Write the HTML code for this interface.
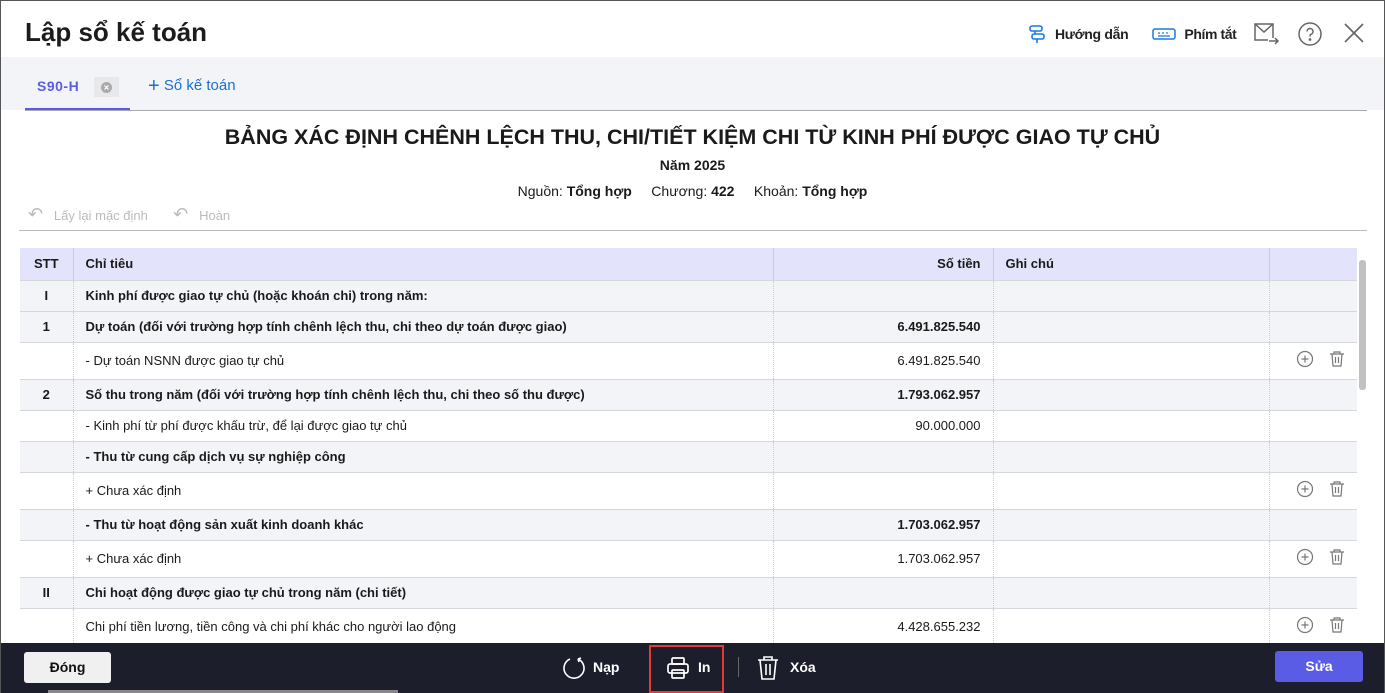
<!DOCTYPE html>
<html><head><meta charset="utf-8"><style>
*{box-sizing:border-box;margin:0;padding:0}
body{width:1385px;height:693px;overflow:hidden;font-family:"Liberation Sans",sans-serif;background:#fff;position:relative;color:#1a1a1a}
.frame{position:absolute;inset:0;border:1px solid #555;border-bottom:none;pointer-events:none;z-index:9}
.abs{position:absolute}
h1{position:absolute;left:25px;top:17px;font-size:26px;font-weight:bold;color:#1c1c1c}
.tabbar{position:absolute;left:1px;top:57px;width:1383px;height:53px;background:#f3f4f7}
.tabline{position:absolute;left:25px;top:110px;width:1342px;height:1px;background:#aaa}
table{position:absolute;left:20px;top:248px;border-collapse:collapse;font-size:13px;width:1337px}
td{border-bottom:1px solid #d6d7dd;padding:0 12px;white-space:nowrap}
td+td{border-left:1px dotted #ccc}
tr.h td{background:#e3e3fb;font-weight:bold;height:32px;border-left:1px solid #c9c9e0}
tr.h td:first-child{border-left:none}
tr.b td{background:#f3f4f8;font-weight:bold;height:31px}
tr.n td{height:37px}
tr.n2 td{height:31px}
.c{text-align:center}.r{text-align:right}
.footer{position:absolute;left:0;top:643px;width:1385px;height:50px;background:#1c1e2b;color:#fff}
</style></head><body>
<div class="frame"></div>
<h1>Lập sổ kế toán</h1>
<div class="abs" style="left:1028px;top:24px;display:flex;align-items:center;font-size:14px;font-weight:bold;color:#222">
<svg width="18" height="20" viewBox="0 0 18 20" fill="none" stroke="#1a7ae0" stroke-width="1.6"><rect x="2" y="2" width="12" height="5" rx="2"/><rect x="4" y="10" width="12" height="5" rx="2"/><path d="M7 7v3M9 15v4"/></svg>
<span style="margin-left:9px;letter-spacing:-0.3px">Hướng dẫn</span>
<svg style="margin-left:24px" width="24" height="14" viewBox="0 0 24 14" fill="none" stroke="#1a7ae0" stroke-width="1.5"><rect x="1" y="2" width="22" height="10" rx="2"/><path d="M6 6h2M10 6h2M14 6h2M6 9h12" stroke-width="1.2"/></svg>
<span style="margin-left:8px;letter-spacing:-0.4px">Phím tắt</span></div>
<svg class="abs" style="left:1254px;top:22px" width="26" height="24" viewBox="0 0 26 24" fill="none" stroke="#666" stroke-width="1.5"><path d="M19 16V2H1v16h13M1 2l9 8 9-8M15 19h9M21 16l3 3-3 3"/></svg>
<svg class="abs" style="left:1298px;top:22px" width="24" height="24" viewBox="0 0 24 24" fill="none" stroke="#666" stroke-width="1.5"><circle cx="12" cy="12" r="11"/><path d="M9 9.5a3 3 0 1 1 4 2.8c-1 .4-1 1-1 2.2"/><circle cx="12" cy="17.5" r=".6" fill="#666"/></svg>
<svg class="abs" style="left:1344px;top:23px" width="20" height="20" viewBox="0 0 20 20" stroke="#666" stroke-width="1.6"><path d="M1 1l18 18M19 1L1 19"/></svg>
<div class="tabbar"></div>
<div class="abs" style="left:37px;top:78px;font-size:14px;font-weight:bold;color:#5b5ce6;letter-spacing:.5px">S90-H</div>
<div class="abs" style="left:94px;top:77px;width:25px;height:20px;background:#e8e8ea"><svg style="margin:5px 7px" width="11" height="11" viewBox="0 0 11 11"><circle cx="5.5" cy="5.5" r="5.5" fill="#aaa"/><path d="M3.5 3.5l4 4M7.5 3.5l-4 4" stroke="#fff" stroke-width="1.2"/></svg></div>
<div class="abs" style="left:25px;top:108px;width:105px;height:3px;background:#5b5ce6"></div>
<div class="tabline"></div>
<div class="abs" style="left:148px;top:77px;font-size:15px;color:#1a6fd6"><span style="font-size:20px;line-height:14px;vertical-align:-2px">+</span> Sổ kế toán</div>
<div class="abs" style="left:0;width:1385px;top:125px;text-align:center;font-size:21.5px;font-weight:bold">BẢNG XÁC ĐỊNH CHÊNH LỆCH THU, CHI/TIẾT KIỆM CHI TỪ KINH PHÍ ĐƯỢC GIAO TỰ CHỦ</div>
<div class="abs" style="left:0;width:1385px;top:157px;text-align:center;font-size:14px;font-weight:bold">Năm 2025</div>
<div class="abs" style="left:0;width:1385px;top:183px;text-align:center;font-size:14px">Nguồn: <b>Tổng hợp</b> &nbsp;&nbsp;&nbsp; Chương: <b>422</b> &nbsp;&nbsp;&nbsp; Khoản: <b>Tổng hợp</b></div>
<div class="abs" style="left:28px;top:204px;font-size:13px;color:#bbb"><span style="font-size:18px">↶</span> &nbsp; Lấy lại mặc định &nbsp;&nbsp;&nbsp;&nbsp;&nbsp; <span style="font-size:18px">↶</span> &nbsp; Hoàn</div>
<div class="abs" style="left:19px;top:230px;width:1348px;height:1px;background:#bbb"></div>
<table>
<colgroup><col style="width:53px"><col style="width:700px"><col style="width:220px"><col style="width:276px"><col style="width:88px"></colgroup>
<tr class="h"><td class="c">STT</td><td>Chỉ tiêu</td><td class="r">Số tiền</td><td>Ghi chú</td><td></td></tr>
<tr class="b"><td class="c">I</td><td>Kinh phí được giao tự chủ (hoặc khoán chi) trong năm:</td><td></td><td></td><td></td></tr>
<tr class="b"><td class="c">1</td><td>Dự toán (đối với trường hợp tính chênh lệch thu, chi theo dự toán được giao)</td><td class="r">6.491.825.540</td><td></td><td></td></tr>
<tr class="n"><td></td><td>- Dự toán NSNN được giao tự chủ</td><td class="r">6.491.825.540</td><td></td><td class="ic"></td></tr>
<tr class="b"><td class="c">2</td><td>Số thu trong năm (đối với trường hợp tính chênh lệch thu, chi theo số thu được)</td><td class="r">1.793.062.957</td><td></td><td></td></tr>
<tr class="n2"><td></td><td>- Kinh phí từ phí được khấu trừ, để lại được giao tự chủ</td><td class="r">90.000.000</td><td></td><td></td></tr>
<tr class="b"><td></td><td>- Thu từ cung cấp dịch vụ sự nghiệp công</td><td></td><td></td><td></td></tr>
<tr class="n"><td></td><td>+ Chưa xác định</td><td></td><td></td><td class="ic"></td></tr>
<tr class="b"><td></td><td>- Thu từ hoạt động sản xuất kinh doanh khác</td><td class="r">1.703.062.957</td><td></td><td></td></tr>
<tr class="n"><td></td><td>+ Chưa xác định</td><td class="r">1.703.062.957</td><td></td><td class="ic"></td></tr>
<tr class="b"><td class="c">II</td><td>Chi hoạt động được giao tự chủ trong năm (chi tiết)</td><td></td><td></td><td></td></tr>
<tr class="n"><td></td><td>Chi phí tiền lương, tiền công và chi phí khác cho người lao động</td><td class="r">4.428.655.232</td><td></td><td class="ic"></td></tr>
</table>
<script>
document.querySelectorAll('td.ic').forEach(function(t){t.style.textAlign='right';t.innerHTML='<svg width="60" height="18" viewBox="0 0 60 18" fill="none" stroke="#777" stroke-width="1.2"><circle cx="12" cy="9" r="7.5"/><path d="M12 5.5v7M8.5 9h7"/><path d="M37 4h14M41 4V2h6v2M39 4l1 12h8l1-12M42.5 7v6M45.5 7v6"/></svg>';t.style.paddingRight='4px'});
</script>
<div class="abs" style="left:1357px;top:248px;width:11px;height:395px;background:#fff"></div>
<div class="abs" style="left:1359px;top:260px;width:7px;height:130px;background:#c1c1c1;border-radius:3px"></div>
<div class="footer">
<div class="abs" style="left:24px;top:9px;width:87px;height:31px;background:#f0f0f0;border-radius:3px;color:#111;font-size:14px;font-weight:bold;text-align:center;line-height:31px">Đóng</div>
<svg class="abs" style="left:563px;top:13px" width="22" height="24" viewBox="0 0 22 24" fill="none" stroke="#fff" stroke-width="1.6"><path d="M15 3a10 10 0 1 1-8 0M15 3l3-1M15 3l1 3"/></svg>
<div class="abs" style="left:593px;top:16px;font-size:14px;font-weight:bold">Nạp</div>
<div class="abs" style="left:649px;top:2px;width:75px;height:48px;border:2px solid #e53935"></div>
<svg class="abs" style="left:666px;top:13px" width="24" height="24" viewBox="0 0 24 24" fill="none" stroke="#fff" stroke-width="1.7"><rect x="6" y="2" width="12" height="6" rx="1"/><rect x="2" y="8" width="20" height="9" rx="2"/><rect x="6" y="14" width="12" height="8" rx="1"/></svg>
<div class="abs" style="left:698px;top:16px;font-size:14px;font-weight:bold">In</div>
<div class="abs" style="left:738px;top:14px;width:1px;height:20px;background:#666"></div>
<svg class="abs" style="left:757px;top:12px" width="22" height="26" viewBox="0 0 22 26" fill="none" stroke="#fff" stroke-width="1.6"><path d="M1 5h20M7 5V2h8v3M3 5l2 19h12l2-19M9 9v11M13 9v11"/></svg>
<div class="abs" style="left:790px;top:16px;font-size:14px;font-weight:bold">Xóa</div>
<div class="abs" style="left:1275px;top:8px;width:88px;height:31px;background:#5b5ce6;border-radius:3px;font-size:14px;font-weight:bold;text-align:center;line-height:31px">Sửa</div>
<div class="abs" style="left:48px;top:47px;width:350px;height:3px;background:#888"></div>
</div>
</body></html>
